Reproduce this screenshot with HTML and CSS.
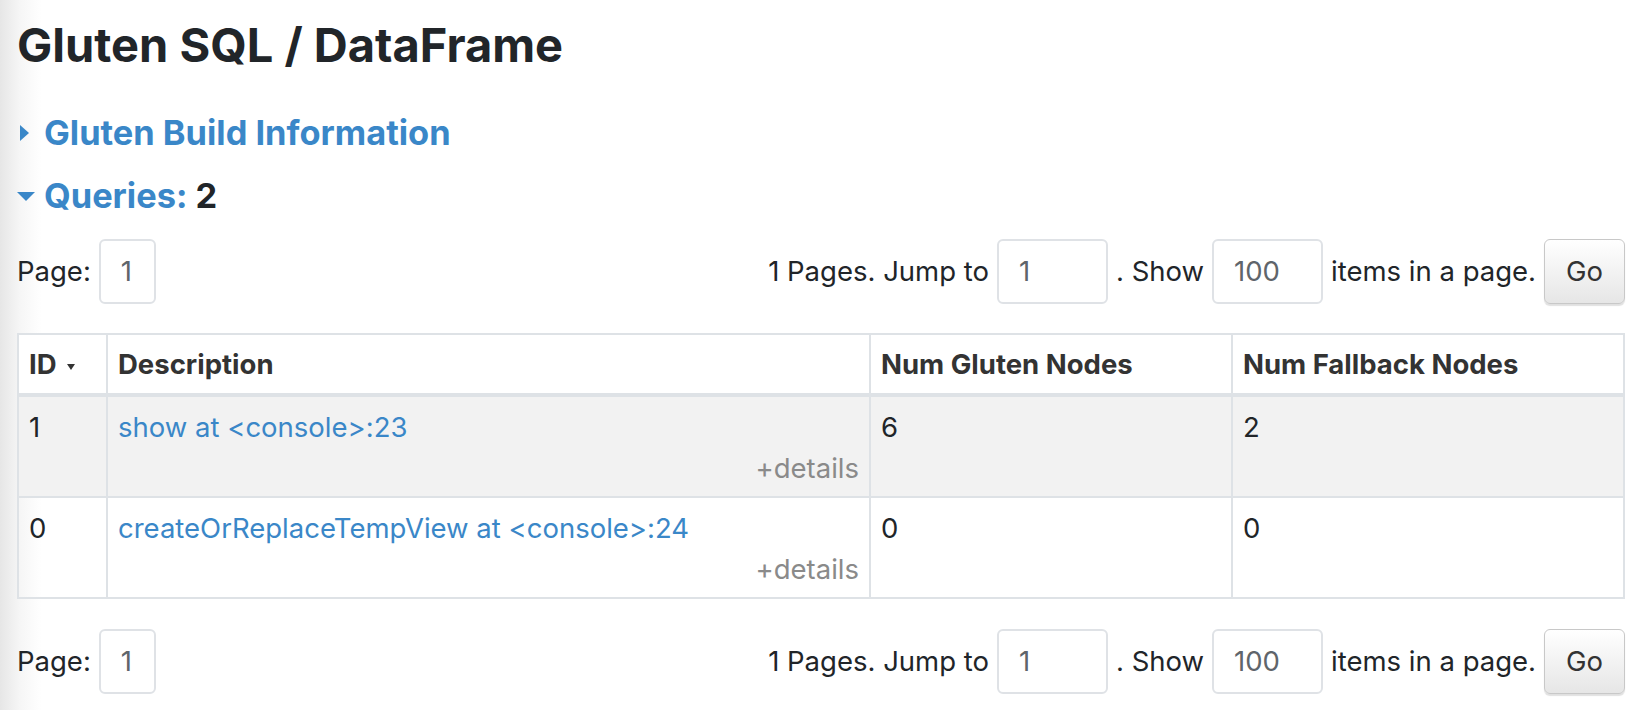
FILE: index.html
```html
<!DOCTYPE html>
<html lang="en">
<head>
<meta charset="utf-8">
<title>Gluten SQL / DataFrame</title>
<link rel="stylesheet" href="styles.css">
</head>
<body>
<div class="page">
  <h3 class="title">Gluten SQL / DataFrame</h3>

  <div class="collapse-head build">
    <span class="arrow arrow-right"></span>
    <h4 class="section"><a class="blue">Gluten Build Information</a></h4>
  </div>

  <div class="collapse-head queries">
    <span class="arrow arrow-down"></span>
    <h4 class="section"><a class="blue">Queries:</a> 2</h4>
  </div>

  <div class="pager pager-top">
    <div class="pager-left">
      <span class="label">Page:</span>
      <span class="box box-page">1</span>
    </div>
    <div class="pager-right">
      <span class="label">1 Pages. Jump to</span>
      <span class="box box-wide">1</span>
      <span class="label">. Show</span>
      <span class="box box-wide">100</span>
      <span class="label">items in a page.</span>
      <span class="btn">Go</span>
    </div>
  </div>

  <table class="grid">
    <thead>
      <tr>
        <th class="c-id">ID <span class="sort"></span></th>
        <th class="c-desc">Description</th>
        <th class="c-gluten">Num Gluten Nodes</th>
        <th class="c-fallback">Num Fallback Nodes</th>
      </tr>
    </thead>
    <tbody>
      <tr class="odd">
        <td>1</td>
        <td><a class="blue link">show at &lt;console&gt;:23</a><div class="details">+details</div></td>
        <td>6</td>
        <td>2</td>
      </tr>
      <tr>
        <td>0</td>
        <td><a class="blue link">createOrReplaceTempView at &lt;console&gt;:24</a><div class="details">+details</div></td>
        <td>0</td>
        <td>0</td>
      </tr>
    </tbody>
  </table>

  <div class="pager pager-bottom">
    <div class="pager-left">
      <span class="label">Page:</span>
      <span class="box box-page">1</span>
    </div>
    <div class="pager-right">
      <span class="label">1 Pages. Jump to</span>
      <span class="box box-wide">1</span>
      <span class="label">. Show</span>
      <span class="box box-wide">100</span>
      <span class="label">items in a page.</span>
      <span class="btn">Go</span>
    </div>
  </div>
</div>
</body>
</html>
```

FILE: styles.css
```css
html, body {
  margin: 0;
  padding: 0;
}

body {
  font-family: Inter, "Noto Sans", sans-serif;
  font-size: 27.5px;
  line-height: 31px;
  color: #212529;
  background: linear-gradient(to right, #e6e6e6 0px, #f6f6f6 20px, #ffffff 42px) no-repeat;
  background-color: #fff;
  min-height: 710px;
}

.page {
  padding: 18px 17px 0 17px;
}

.title {
  margin: 0;
  font-size: 47px;
  font-weight: 700;
  line-height: 53px;
  color: #212529;
}

.collapse-head {
  display: flex;
  align-items: center;
  height: 40px;
}

.build {
  margin-top: 42px;
}

.queries {
  margin-top: 23px;
}

.section {
  margin: 0;
  font-size: 34.4px;
  font-weight: 700;
  line-height: 40px;
  color: #212529;
}

.blue {
  color: #3a87c8;
  text-decoration: none;
}

.arrow {
  display: inline-block;
  width: 0;
  height: 0;
}

.arrow-right {
  margin-left: 3px;
  margin-right: 15px;
  border-top: 8px solid transparent;
  border-bottom: 8px solid transparent;
  border-left: 9px solid #3a87c8;
}

.arrow-down {
  margin-left: 0;
  margin-right: 9px;
  border-left: 9px solid transparent;
  border-right: 9px solid transparent;
  border-top: 9px solid #3a87c8;
}

.pager {
  display: flex;
  justify-content: space-between;
  align-items: center;
}

.pager-top {
  margin-top: 23px;
}

.pager-bottom {
  margin-top: 30px;
}

.pager-left,
.pager-right {
  display: flex;
  align-items: center;
}

.pager-left {
  gap: 8px;
}

.pager-right {
  gap: 8px;
}

.box {
  box-sizing: border-box;
  height: 65px;
  display: flex;
  align-items: center;
  border: 2px solid #dfe2e6;
  border-radius: 6px;
  background: #fff;
  color: #5f656b;
  padding-left: 20px;
}

.box-page {
  width: 57px;
}

.box-wide {
  width: 111px;
}

.btn {
  box-sizing: border-box;
  width: 81px;
  height: 65px;
  display: flex;
  align-items: center;
  justify-content: center;
  border: 1px solid #c8c8c8;
  border-radius: 6px;
  background: linear-gradient(to bottom, #ffffff 0%, #e6e6e6 100%);
  box-shadow: 0 2px 1px rgba(0, 0, 0, 0.12);
  color: #333;
}

.grid {
  margin-top: 29px;
  width: 100%;
  border-collapse: collapse;
  table-layout: fixed;
  border: 2px solid #dee2e6;
}

.grid th,
.grid td {
  box-sizing: border-box;
  border: 2px solid #dee2e6;
  text-align: left;
  vertical-align: top;
  padding: 15px 10px 12px 10px;
}

.grid th {
  font-weight: 700;
  color: #333;
  background: #fff;
  padding-top: 14px;
  padding-bottom: 13px;
}

.grid thead th {
  border-bottom: 4px solid #dee2e6;
}

.c-id { width: 89px; }
.c-desc { width: 763px; }
.c-gluten { width: 362px; }
.c-fallback { width: auto; }

.sort {
  display: inline-block;
  width: 0;
  height: 0;
  margin-left: 4px;
  vertical-align: middle;
  border-left: 4px solid transparent;
  border-right: 4px solid transparent;
  border-top: 6px solid #333;
}

.grid tr.odd td {
  background: #f2f2f2;
}

.details {
  margin-top: 10px;
  text-align: right;
  color: #8a8a8a;
}
```
